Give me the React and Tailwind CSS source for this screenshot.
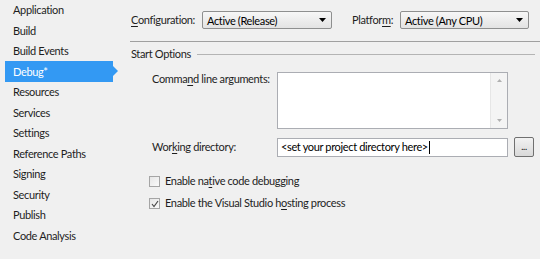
import React from 'react';

const font = { fontFamily: 'Lato, "Noto Sans", Arial, sans-serif' };

const pages = [
  'Application',
  'Build',
  'Build Events',
  'Debug*',
  'Resources',
  'Services',
  'Settings',
  'Reference Paths',
  'Signing',
  'Security',
  'Publish',
  'Code Analysis',
];

function Key({ children }) {
  return <span className="underline underline-offset-2">{children}</span>;
}

function Combo({ value, width }) {
  return (
    <div
      className={`${width} h-[18px] flex items-center justify-between rounded-[2px] border border-[#8e8f8f] bg-gradient-to-b from-[#f7f7f7] to-[#e3e3e3] pl-[4px] pr-[5px]`}
    >
      <span className="text-[11px] text-black leading-none">{value}</span>
      <svg width="7" height="4" viewBox="0 0 7 4">
        <path d="M0 0h7L3.5 4z" fill="#000" />
      </svg>
    </div>
  );
}

function Check({ checked, children }) {
  return (
    <div className="flex items-center gap-[5px] h-[11px]">
      <div className="w-[11px] h-[11px] border border-[#a5a5a5] bg-gradient-to-br from-[#e6e6e6] to-[#fafafa] flex items-center justify-center">
        {checked && (
          <svg width="8" height="8" viewBox="0 0 8 8">
            <path d="M1 4l2 2.5L7 1" stroke="#4a4a4a" strokeWidth="1.2" fill="none" />
          </svg>
        )}
      </div>
      <span className="text-[11px] text-[#1e1e1e]">{children}</span>
    </div>
  );
}

export default function App() {
  return (
    <div style={font} className="w-[540px] h-[259px] bg-[#f0f0f0] flex overflow-hidden tracking-[-0.35px]">
      {/* page list */}
      <div className="w-[120px] shrink-0 flex flex-col">
        {pages.map((p) =>
          p === 'Debug*' ? (
            <div key={p} className="h-[20.5px] flex items-center">
              <div className="relative ml-[5px] w-[108px] h-[21px] bg-[#3399f3] flex items-center pl-[8px]">
                <span className="text-[11px] text-white">Debug*</span>
                <div className="absolute right-[-5px] top-[5px] w-0 h-0 border-y-[5.5px] border-y-transparent border-l-[5px] border-l-[#3399f3]" />
              </div>
            </div>
          ) : (
            <div key={p} className="h-[20.5px] flex items-center pl-[13px]">
              <span className="text-[11px] text-[#1e1e1e]">{p}</span>
            </div>
          )
        )}
      </div>

      {/* settings */}
      <div className="flex-1 flex flex-col pl-[10px] text-[#1e1e1e]">
        <div className="flex items-center h-[18px] mt-[11px]">
          <span className="text-[11px] w-[71px] ml-[1px] whitespace-nowrap">
            <Key>C</Key>onfiguration:
          </span>
          <Combo value="Active (Release)" width="w-[130px]" />
          <span className="text-[11px] ml-[20px] w-[48px] whitespace-nowrap">
            Platfor<Key>m</Key>:
          </span>
          <Combo value="Active (Any CPU)" width="w-[129px]" />
        </div>

        <div className="mt-[12px] h-px bg-[#a0a0a0]" />

        <div className="flex items-center mt-[4px] h-[16px] pr-[5px]">
          <span className="text-[11px] ml-[1px]">Start Options</span>
          <div className="flex-1 h-px bg-[#b4b4b4] ml-[6px]" />
        </div>

        <div className="flex mt-[10px] ml-[22px]">
          <span className="text-[11px] w-[125px] mt-[-1px] whitespace-nowrap">
            Comma<Key>n</Key>d line arguments:
          </span>
          <div className="w-[231px] h-[57px] border border-[#abadb3] bg-white flex justify-end">
            <div className="w-[17px] bg-[#f4f4f4] border-l border-[#e6e6e6] flex flex-col items-center justify-between py-[6px]">
              <svg width="5" height="3" viewBox="0 0 5 3">
                <path d="M0 3L2.5 0L5 3z" fill="#b0b0b0" />
              </svg>
              <svg width="5" height="3" viewBox="0 0 5 3">
                <path d="M0 0h5L2.5 3z" fill="#b0b0b0" />
              </svg>
            </div>
          </div>
        </div>

        <div className="flex items-center mt-[8px] ml-[22px]">
          <span className="text-[11px] w-[125px] whitespace-nowrap">
            Wor<Key>k</Key>ing directory:
          </span>
          <div className="w-[231px] h-[19px] border border-[#abadb3] bg-white flex items-center pl-[3px]">
            <span className="text-[11px] text-black">&lt;set your project directory here&gt;</span>
            <span className="w-px h-[13px] bg-black ml-[1px]" />
          </div>
          <div className="ml-[6px] w-[20px] h-[20px] rounded-[2px] border border-[#707070] bg-gradient-to-b from-[#f2f2f2] to-[#d9d9d9] flex items-end justify-center pb-[5px]">
            <span className="text-[9px] leading-none text-black">...</span>
          </div>
        </div>

        <div className="flex flex-col gap-[11px] mt-[19px] ml-[19px]">
          <Check>
            Enable na<Key>t</Key>ive code debugging
          </Check>
          <Check checked>
            Enable the Visual Studio h<Key>o</Key>sting process
          </Check>
        </div>
      </div>
    </div>
  );
}
